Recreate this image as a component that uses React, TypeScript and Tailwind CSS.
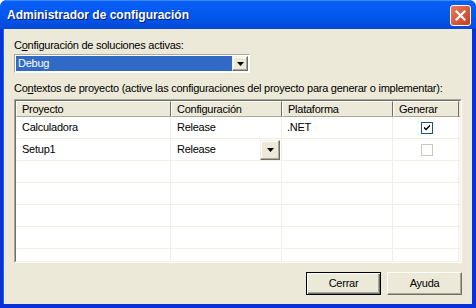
import React from 'react';

const font = { fontFamily: '"Liberation Sans", Arial, sans-serif' };

const DropArrow = () => (
  <svg width="7" height="4" viewBox="0 0 7 4">
    <path d="M0 0h7L3.5 4z" fill="#000" />
  </svg>
);

const DropButton = ({ className }: { className: string }) => (
  <div
    className={`flex items-center justify-center bg-[#ECE9D8] border border-t-[#F1EFE2] border-l-[#F1EFE2] border-r-[#716F64] border-b-[#716F64] shadow-[inset_-1px_-1px_0_#ACA899,inset_1px_1px_0_#fff] ${className}`}
  >
    <DropArrow />
  </div>
);

const Check = ({ checked, disabled }: { checked?: boolean; disabled?: boolean }) => (
  <div
    className={`w-[12px] h-[12px] border flex items-center justify-center ${
      disabled ? 'border-[#CAC8BB] bg-white' : 'border-[#1C5180] bg-white'
    }`}
  >
    {checked && (
      <svg width="8" height="7" viewBox="0 0 8 7">
        <path d="M1 2.5l2 2 4-4v2l-4 4-2-2z" fill="#000" />
      </svg>
    )}
  </div>
);

const cols = ['w-[155px]', 'w-[111px]', 'w-[111px]', 'w-[66px]'];

export default function App() {
  const rows = [
    { p: 'Calculadora', c: 'Release', pl: '.NET', g: 'checked' },
    { p: 'Setup1', c: 'Release', pl: '', g: 'disabled', drop: true },
    {}, {}, {}, {}, {},
  ] as { p?: string; c?: string; pl?: string; g?: string; drop?: boolean }[];

  return (
    <div className="w-[476px] h-[308px] bg-[#0831D9] flex flex-col rounded-t-[7px] overflow-hidden text-[11px] tracking-[-0.25px] text-black" style={font}>
      <div className="h-[29px] shrink-0 flex items-center justify-between pl-[7px] pr-[5px] bg-gradient-to-b from-[#0A5EF6] via-[#0058EE] to-[#0349D8] border-t border-[#3D8BFF]">
        <span className="text-white font-bold text-[12px] tracking-[0px] [text-shadow:1px_1px_0_#0A1874]">
          Administrador de configuración
        </span>
        <div className="w-[21px] h-[21px] rounded-[3px] border border-white bg-gradient-to-br from-[#E87A5C] to-[#C63A1B] flex items-center justify-center">
          <svg width="11" height="11" viewBox="0 0 11 11">
            <path d="M1.5 1.5l8 8M9.5 1.5l-8 8" stroke="#fff" strokeWidth="2.2" strokeLinecap="square" />
          </svg>
        </div>
      </div>
      <div className="flex-1 mx-[3px] mr-[4px] mb-[4px] bg-[#ECE9D8] pl-[10px] pr-[10px] pt-[8px] flex flex-col border-l border-[#166AEE]">
        <div className="h-[16px] leading-[16px] whitespace-nowrap">
          C<span className="underline">o</span>nfiguración de soluciones activas:
        </div>
        <div className="mt-[1px] w-[236px] h-[19px] bg-white border border-t-[#ACA899] border-l-[#ACA899] border-r-white border-b-white flex p-[1px]">
          <div className="flex-1 bg-[#316AC5] text-white leading-[15px] pl-[2px]">Debug</div>
          <DropButton className="w-[16px] h-[15px]" />
        </div>
        <div className="mt-[8px] h-[14px] leading-[14px] whitespace-nowrap">
          Co<span className="underline">n</span>textos de proyecto (active las configuraciones del proyecto para generar o implementar):
        </div>
        <div className="mt-[4px] w-[448px] h-[164px] bg-white border border-t-[#ACA899] border-l-[#ACA899] border-r-white border-b-white overflow-hidden">
          <div className="h-full border border-t-[#716F64] border-l-[#716F64] border-r-[#F1EFE2] border-b-[#F1EFE2] overflow-hidden">
            <div className="flex h-[16px] bg-[#ECE9D8]">
              {['Proyecto', 'Configuración', 'Plataforma', 'Generar'].map((h, i) => (
                <div
                  key={h}
                  className={`${cols[i]} shrink-0 h-full leading-[14px] pl-[5px] border border-t-white border-l-white border-r-[#716F64] border-b-[#ACA899]`}
                >
                  {h}
                </div>
              ))}
              <div className="flex-1 border-b border-[#ACA899]" />
            </div>
            {rows.map((r, i) => (
              <div key={i} className="flex h-[22px] border-b border-[#F1EFE2]">
                <div className={`${cols[0]} shrink-0 border-r border-[#F1EFE2] pl-[6px] leading-[21px]`}>{r.p}</div>
                <div className={`${cols[1]} shrink-0 border-r border-[#F1EFE2] pl-[6px] flex items-center justify-between pr-[1px]`}>
                  <span>{r.c}</span>
                  {r.drop && <DropButton className="w-[20px] h-[20px]" />}
                </div>
                <div className={`${cols[2]} shrink-0 border-r border-[#F1EFE2] pl-[5px] leading-[21px]`}>{r.pl}</div>
                <div className={`${cols[3]} shrink-0 border-r border-[#F1EFE2] flex items-center justify-center pl-[2px]`}>
                  {r.g && <Check checked={r.g === 'checked'} disabled={r.g === 'disabled'} />}
                </div>
              </div>
            ))}
          </div>
        </div>
        <div className="mt-[9px] flex justify-end gap-[6px]">
          <button className="w-[75px] h-[23px] bg-[#ECE9D8] border border-black shadow-[inset_1px_1px_0_#fff,inset_-1px_-1px_0_#716F64,inset_-2px_-2px_0_#ACA899]">
            Cerrar
          </button>
          <button className="w-[75px] h-[23px] bg-[#ECE9D8] border border-t-white border-l-white border-r-[#716F64] border-b-[#716F64] shadow-[inset_-1px_-1px_0_#ACA899]">
            Ayuda
          </button>
        </div>
      </div>
    </div>
  );
}
